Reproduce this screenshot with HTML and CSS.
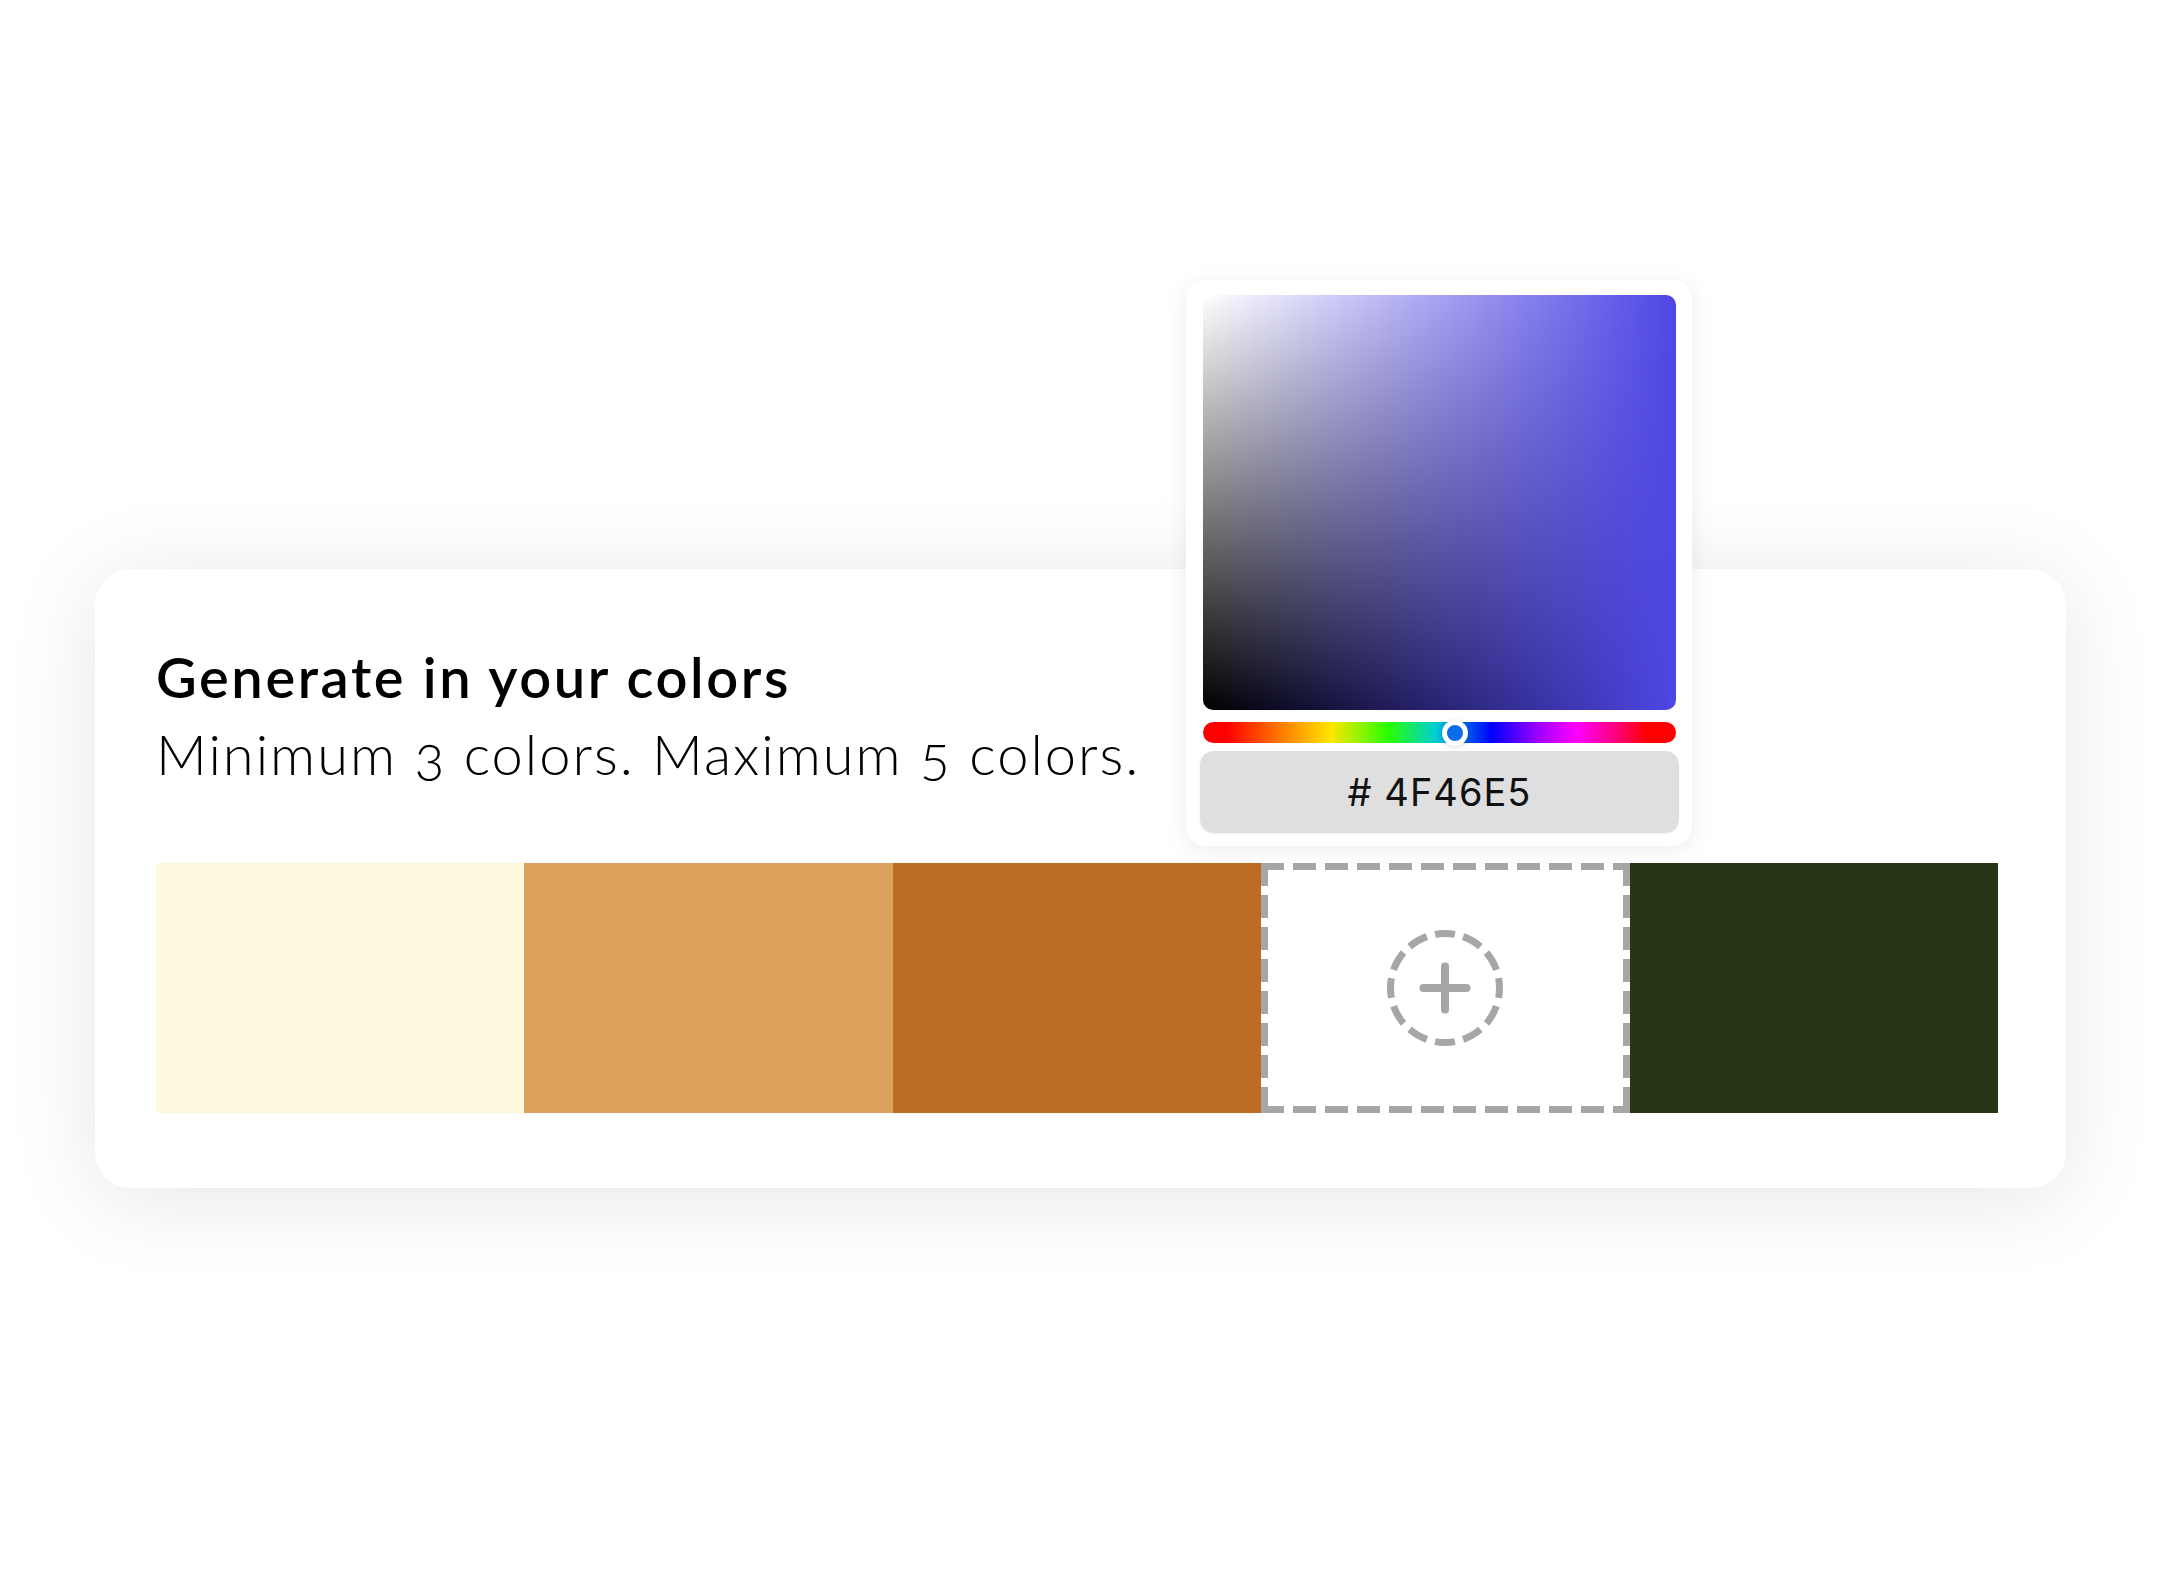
FILE: index.html
```html
<!DOCTYPE html>
<html lang="en">
<head>
    <meta charset="UTF-8">
    <meta name="viewport" content="width=device-width, initial-scale=1.0">
    <title>Palette colors</title>
    <link rel="stylesheet" href="styles.css">
</head>
<body>
    <div class="stage">
        <div class="card">
            <!-- colour picker popup over the card -->
            <div class="picker">
                <div class="picker-area"></div>
                <div class="hue-bar">
                    <span class="hue-thumb"></span>
                </div>
                <div class="hex-field"># 4F46E5</div>
            </div>

            <h2 class="card-title">Generate in your colors</h2>
            <p class="card-subtitle">Minimum 3 colors. Maximum 5 colors.</p>

            <div class="palette">
                <div class="swatch swatch-cream"></div>
                <div class="swatch swatch-sand"></div>
                <div class="swatch swatch-rust"></div>
                <div class="swatch swatch-add">
                    <svg class="add-icon" width="120" height="120" viewBox="0 0 120 120">
                        <circle cx="60" cy="60" r="54.5" fill="none" stroke="#a6a6a6" stroke-width="7"
                                pathLength="120" stroke-dasharray="7 3" stroke-dashoffset="3.5"/>
                        <line x1="60" y1="38.5" x2="60" y2="81.5" stroke="#a6a6a6" stroke-width="8" stroke-linecap="round"/>
                        <line x1="38.5" y1="60" x2="81.5" y2="60" stroke="#a6a6a6" stroke-width="8" stroke-linecap="round"/>
                    </svg>
                </div>
                <div class="swatch swatch-forest"></div>
            </div>
        </div>
    </div>
</body>
</html>
```

FILE: styles.css
```css
body {
    margin: 0;
    background-color: #fff;
    font-family: Lato, "Open Sans", sans-serif;
    color: #000;
}
.stage {
    padding: 569px 94px 0 95px;
    height: 1588px;
    box-sizing: border-box;
}
.card {
    position: relative;
    background-color: #fff;
    border-radius: 36px;
    box-shadow: 0 10px 90px rgba(0,0,0,0.1);
    padding: 74px 68px 75px 61px;
}
.card-title {
    margin: 0;
    font-size: 56px;
    font-weight: 600;
    line-height: 67px;
    letter-spacing: 2.6px;
}
.card-subtitle {
    margin: 10px 0 0 0;
    font-size: 56px;
    font-weight: 300;
    line-height: 67px;
    letter-spacing: 2px;
    font-variant-numeric: oldstyle-nums;
}
.palette {
    display: grid;
    grid-template-columns: repeat(5, 1fr);
    height: 250px;
    margin-top: 76px;
}
.swatch {
    box-sizing: border-box;
}
.swatch-cream { background-color: #fefae0; }
.swatch-sand { background-color: #dda15e; }
.swatch-rust { background-color: #bc6c25; }
.swatch-forest { background-color: #283618; }
/* long dashes, the browser's dashed border is too short */
.swatch-add {
    background-color: #fff;
    background-image:
        repeating-linear-gradient(to right, #a6a6a6 0 23px, transparent 23px 32px),
        repeating-linear-gradient(to right, #a6a6a6 0 23px, transparent 23px 32px),
        repeating-linear-gradient(to bottom, #a6a6a6 0 23px, transparent 23px 32px),
        repeating-linear-gradient(to bottom, #a6a6a6 0 23px, transparent 23px 32px);
    background-size: 100% 7px, 100% 7px, 7px 100%, 7px 100%;
    background-position: left top, left bottom, left top, right top;
    background-repeat: no-repeat;
    display: flex;
    align-items: center;
    justify-content: center;
}

/* picker */
.picker {
    position: absolute;
    left: 1091px;
    top: -289px;
    width: 506px;
    box-sizing: border-box;
    padding: 15px 16px 13px 17px;
    background-color: #fff;
    border-radius: 20px;
    box-shadow: 0 4px 24px rgba(0,0,0,0.08);
    z-index: 2;
}
.picker-area {
    height: 415px;
    border-radius: 10px;
    background: linear-gradient(to right, rgba(79,70,229,0), #4f46e5),
                linear-gradient(to bottom, #fff, #000);
}
.hue-bar {
    position: relative;
    height: 21px;
    margin-top: 12px;
    border-radius: 11px;
    background: linear-gradient(to right, #f00 0%, #f00 5%, #ff8000 17%, #ffe600 27%, #2aff00 39%, #00d0d0 49%, #00f 61%, #a000ff 71%, #f0f 79%, #ff0080 87%, #f00 94%, #f00 100%);
}
.hue-thumb {
    position: absolute;
    left: 53.3%;
    top: 50%;
    width: 26px;
    height: 26px;
    box-sizing: border-box;
    margin: -13px 0 0 -13px;
    border-radius: 50%;
    border: 5px solid #fff;
    background-color: #0a6ce8;
    box-shadow: 0 1px 4px rgba(0,0,0,0.15);
}
.hex-field {
    margin: 8px -3px 0 -3px;
    height: 82px;
    border-radius: 14px;
    background-color: #dfdfdf;
    box-shadow: 0 1px 3px rgba(0,0,0,0.06);
    display: flex;
    align-items: center;
    justify-content: center;
    font-family: Inter, "Noto Sans", sans-serif;
    font-size: 38px;
    letter-spacing: 1px;
    color: #111;
}
```
